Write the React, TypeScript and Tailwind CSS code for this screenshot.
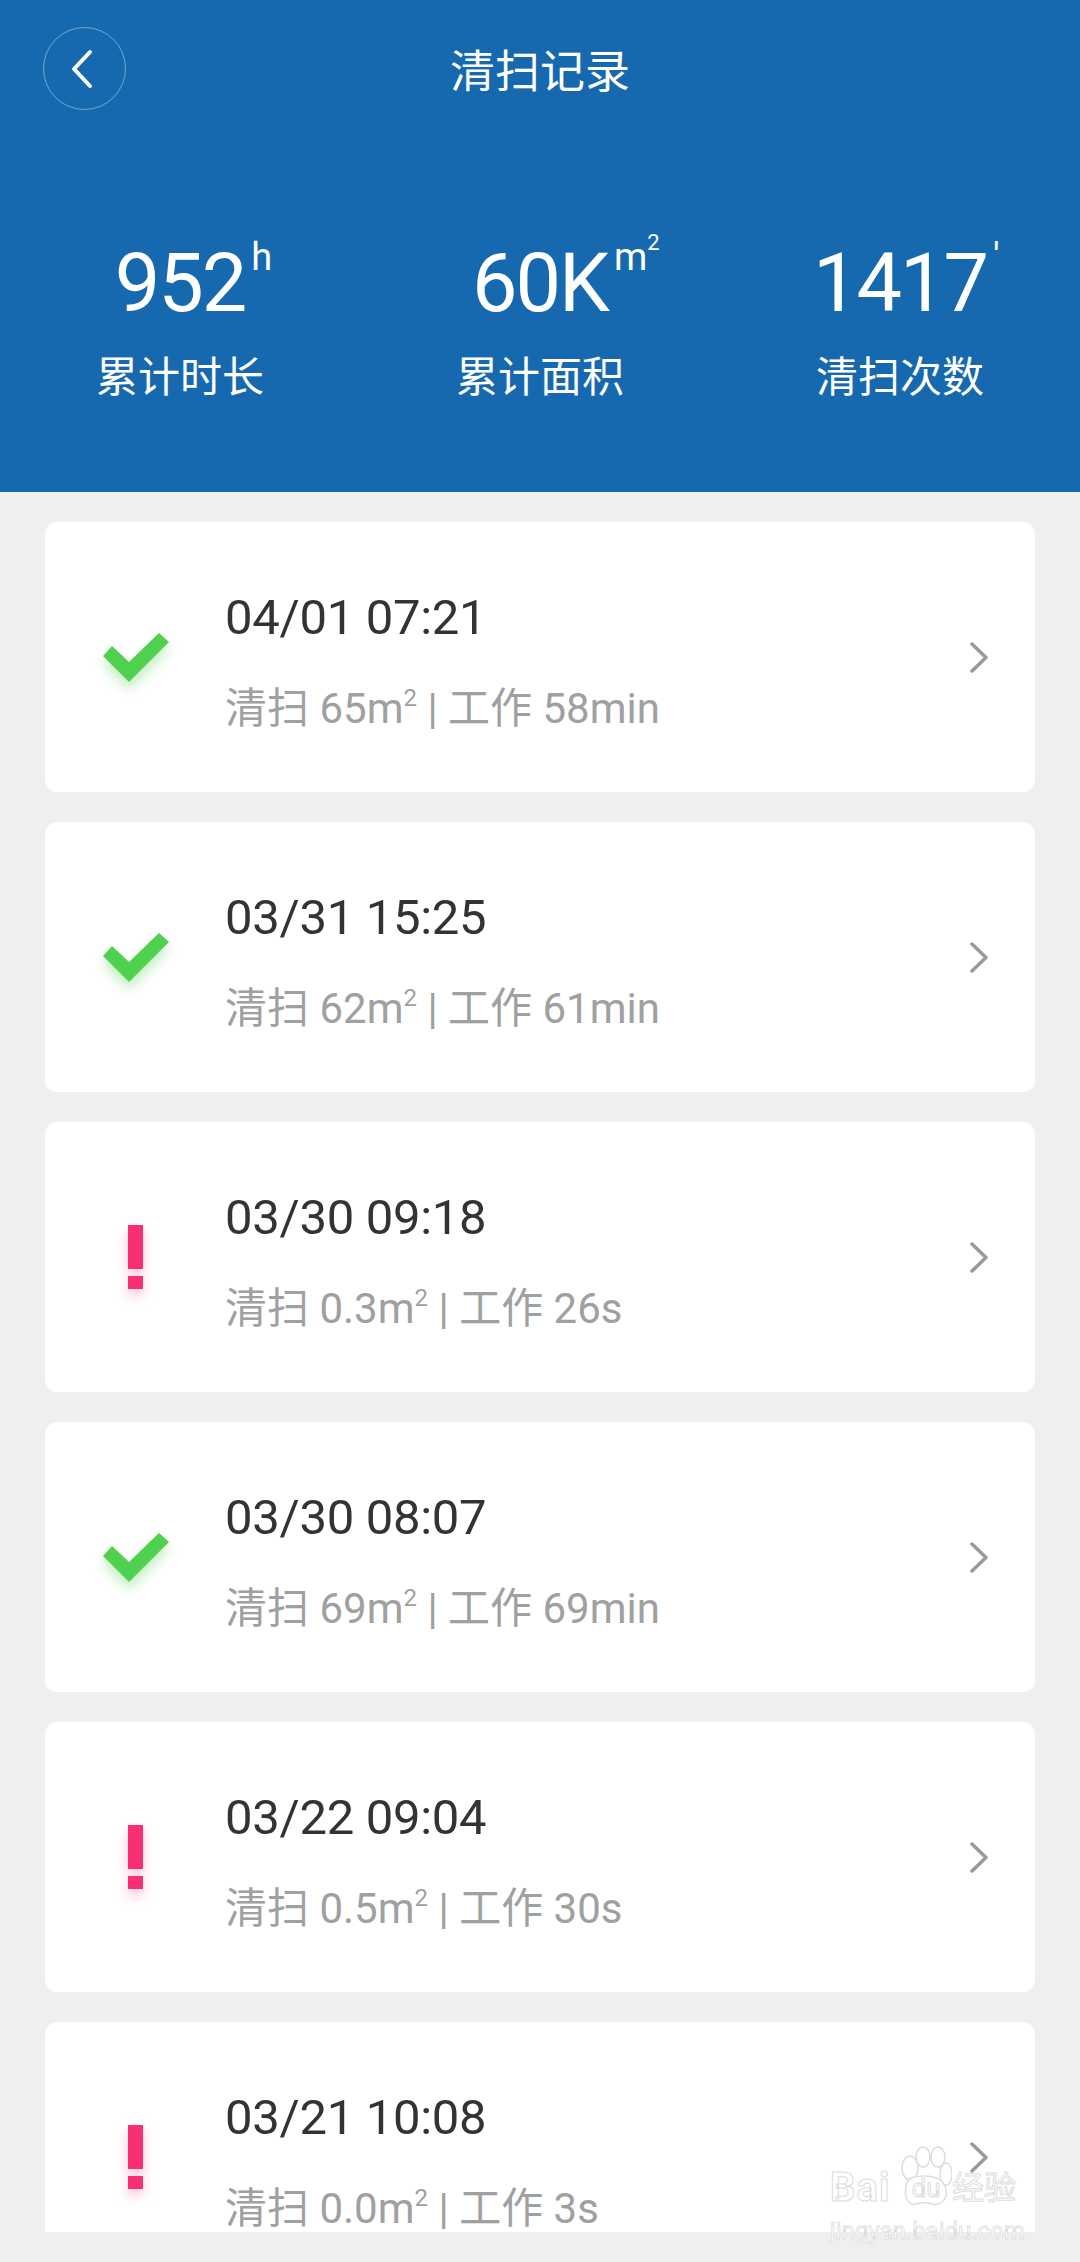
type Status = 'ok' | 'error';

interface CleanRecord {
  time: string;
  area: string;
  work: string;
  status: Status;
}

const stats = [
  { value: '952', unit: 'h', power: '', label: '累计时长' },
  { value: '60K', unit: 'm', power: '2', label: '累计面积' },
  { value: '1417', unit: "'", power: '', label: '清扫次数' },
];

const records: CleanRecord[] = [
  { time: '04/01 07:21', area: '65', work: '58min', status: 'ok' },
  { time: '03/31 15:25', area: '62', work: '61min', status: 'ok' },
  { time: '03/30 09:18', area: '0.3', work: '26s', status: 'error' },
  { time: '03/30 08:07', area: '69', work: '69min', status: 'ok' },
  { time: '03/22 09:04', area: '0.5', work: '30s', status: 'error' },
  { time: '03/21 10:08', area: '0.0', work: '3s', status: 'error' },
];

const CheckIcon = () => (
  <svg width="66" height="50" viewBox="0 0 66 50" className="drop-shadow-[0_8px_6px_rgba(80,210,80,0.35)]">
    <path d="M0 23 L9 13 L26 29 L56 0 L66 9 L26 49 Z" fill="#4fd04f" />
  </svg>
);

const AlertIcon = () => (
  <svg width="15" height="64" viewBox="0 0 15 64" className="drop-shadow-[0_6px_6px_rgba(250,50,120,0.3)]">
    <rect x="0" y="0" width="15" height="44" fill="#f92f74" />
    <rect x="0" y="51" width="15" height="13" fill="#f92f74" />
  </svg>
);

const RecordCard = ({ record }: { record: CleanRecord }) => (
  <div className="flex h-[270px] shrink-0 items-center rounded-[12px] bg-white">
    <div className="flex h-full w-[180px] shrink-0 items-start justify-center">
      <div className={record.status === 'ok' ? 'mt-[111px] ml-[1px]' : 'mt-[103px]'}>
        {record.status === 'ok' ? <CheckIcon /> : <AlertIcon />}
      </div>
    </div>
    <div className="flex-1 pt-[12px]">
      <div className="text-[49px] leading-[60px] tracking-[-0.3px] text-[#333]">{record.time}</div>
      <div className="mt-[31px] text-[42px] leading-[60px] text-[#a0a0a0]">
        清扫 {record.area}m<sup className="-top-[17px] text-[24px]">2</sup> | 工作 {record.work}
      </div>
    </div>
    <svg width="18" height="31" viewBox="0 0 18 31" fill="none" className="mr-[47px]">
      <path d="M2 2 L16 15.5 L2 29" stroke="#9a9a9a" strokeWidth="3.5" strokeLinecap="round" strokeLinejoin="round" />
    </svg>
  </div>
);

// 右下角百度经验水印
const Watermark = () => (
  <div className="absolute top-[2146px] left-[830px] w-[192px] text-white">
    <svg width="56" height="64" viewBox="0 0 56 64" fill="white" stroke="#ddd" strokeWidth="1.5" className="absolute top-0 left-[66px]">
      <ellipse cx="14" cy="22" rx="8" ry="12" />
      <ellipse cx="27" cy="11" rx="7" ry="10" />
      <ellipse cx="42" cy="11" rx="7" ry="10" />
      <ellipse cx="50" cy="28" rx="6" ry="11" />
      <path d="M10 42 C10 30 22 30 28 30 C36 30 48 32 50 44 C52 54 44 60 36 58 C30 56 26 56 20 58 C12 60 8 50 10 42 Z" />
    </svg>
    <div className="relative mt-[24px] flex h-[36px] items-center font-bold [-webkit-text-stroke:1px_#ddd]">
      <span className="w-[70px] text-[40px] tracking-[1px]">Bai</span>
      <span className="w-[52px] text-center text-[26px] font-normal">du</span>
      <span className="text-[32px] font-normal whitespace-nowrap">经验</span>
    </div>
    <div className="mt-[10px] text-[24px] leading-[30px] whitespace-nowrap [-webkit-text-stroke:0.8px_#ddd]">jingyan.baidu.com</div>
  </div>
);

export default function App() {
  return (
    <div className="relative h-[2262px] w-[1080px] overflow-hidden bg-[#eeeff1] font-['Roboto','Noto_Sans_CJK_SC',sans-serif]">
      <header className="h-[492px] bg-[#1769af] text-white">
        <div className="grid grid-cols-[1fr_auto_1fr] items-center px-[43px] pt-[27px]">
          <div className="flex h-[83px] w-[83px] items-center justify-center rounded-full border border-white/40">
            <svg width="24" height="40" viewBox="0 0 24 40" className="-ml-[6px]" fill="none">
              <path d="M20 3 L4 20 L20 37" stroke="white" strokeWidth="4" strokeLinecap="round" strokeLinejoin="round" />
            </svg>
          </div>
          <div className="mt-[8px] text-[45px] leading-[60px]">清扫记录</div>
          <div />
        </div>
        <div className="mt-[129px] grid grid-cols-3">
          {stats.map((item) => (
            <div key={item.label} className="flex flex-col items-center">
              <div className="relative text-[81px] leading-[90px] tracking-[-2px]">
                {item.value}
                <span className="absolute top-[-7px] left-full ml-[6px] text-[38px] leading-[50px] tracking-normal">
                  {item.unit}
                  {item.power && <sup className="-top-[20px] text-[22px]">{item.power}</sup>}
                </span>
              </div>
              <div className="mt-[19px] text-[42px] leading-[60px]">{item.label}</div>
            </div>
          ))}
        </div>
      </header>
      <main className="flex h-[1740px] flex-col gap-[30px] overflow-hidden px-[45px] pt-[30px]">
        {records.map((record) => (
          <RecordCard key={record.time} record={record} />
        ))}
      </main>
      <Watermark />
    </div>
  );
}
